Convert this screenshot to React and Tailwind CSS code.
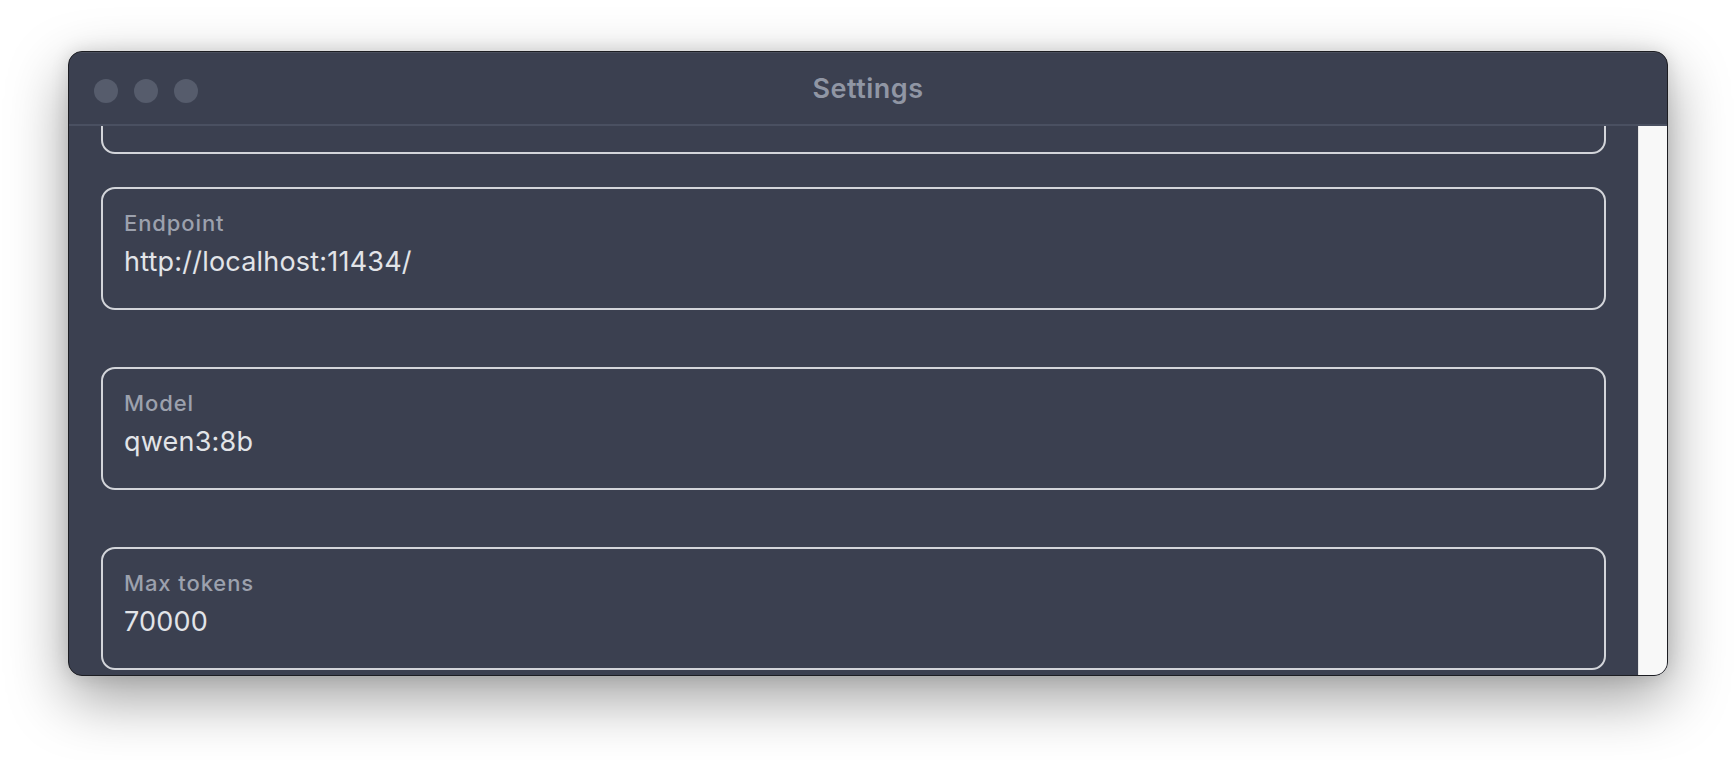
import React from 'react'

const fields = [
  { label: 'Endpoint', value: 'http://localhost:11434/' },
  { label: 'Model', value: 'qwen3:8b' },
  { label: 'Max tokens', value: '70000' },
]

// ─── one settings field: label over value, framed ───
function Field({ label, value, className = '' }) {
  return (
    <div className={`h-[123px] shrink-0 rounded-[14px] border-2 border-[#d3d5da] px-[21px] pt-[21px] ${className}`}>
      <div className="text-[22px] leading-[1.2] font-medium tracking-[0.9px] text-[#9ca1ad]">{label}</div>
      <div className="mt-[10px] text-[27px] leading-[1.2] tracking-[0.2px] text-[#e2e4e8]">{value}</div>
    </div>
  )
}

export default function App() {
  return (
    <div
      className="w-[1736px] h-[760px] bg-white pt-[51px] pl-[68px]"
      style={{ fontFamily: 'Inter, "Noto Sans", sans-serif' }}
    >
      <div className="w-[1600px] h-[625px] rounded-[14px] overflow-hidden flex flex-col bg-[#3b4050] border border-[#1c1d22] shadow-[0_22px_60px_rgba(0,0,0,0.38),0_0_18px_rgba(0,0,0,0.12)]">
        {/* Title bar */}
        <div className="h-[74px] shrink-0 grid grid-cols-[1fr_auto_1fr] items-center border-b-2 border-[#4a5061] shadow-[inset_0_1px_0_rgba(255,255,255,0.08)]">
          <div className="flex items-center gap-4 pl-[25px] pt-[5px]">
            <span className="w-6 h-6 rounded-full bg-[#565c6c]" />
            <span className="w-6 h-6 rounded-full bg-[#565c6c]" />
            <span className="w-6 h-6 rounded-full bg-[#565c6c]" />
          </div>
          <div className="text-[27px] font-semibold tracking-[0.5px] text-[#9096a4] leading-none">Settings</div>
          <div />
        </div>

        {/* Scrolled content + scrollbar track */}
        <div className="flex-1 flex min-h-0">
          <div className="flex-1 overflow-hidden px-8">
            <div className="flex flex-col -mt-[95px]">
              <div className="h-[123px] shrink-0 rounded-[14px] border-2 border-[#d3d5da] mb-[33px]" />
              {fields.map((f, i) => (
                <Field key={f.label} {...f} className={i > 0 ? 'mt-[57px]' : ''} />
              ))}
            </div>
          </div>
          <div className="w-[29px] shrink-0 bg-[#f8f8f8] border-l border-[#e4e4e4]" />
        </div>
      </div>
    </div>
  )
}
